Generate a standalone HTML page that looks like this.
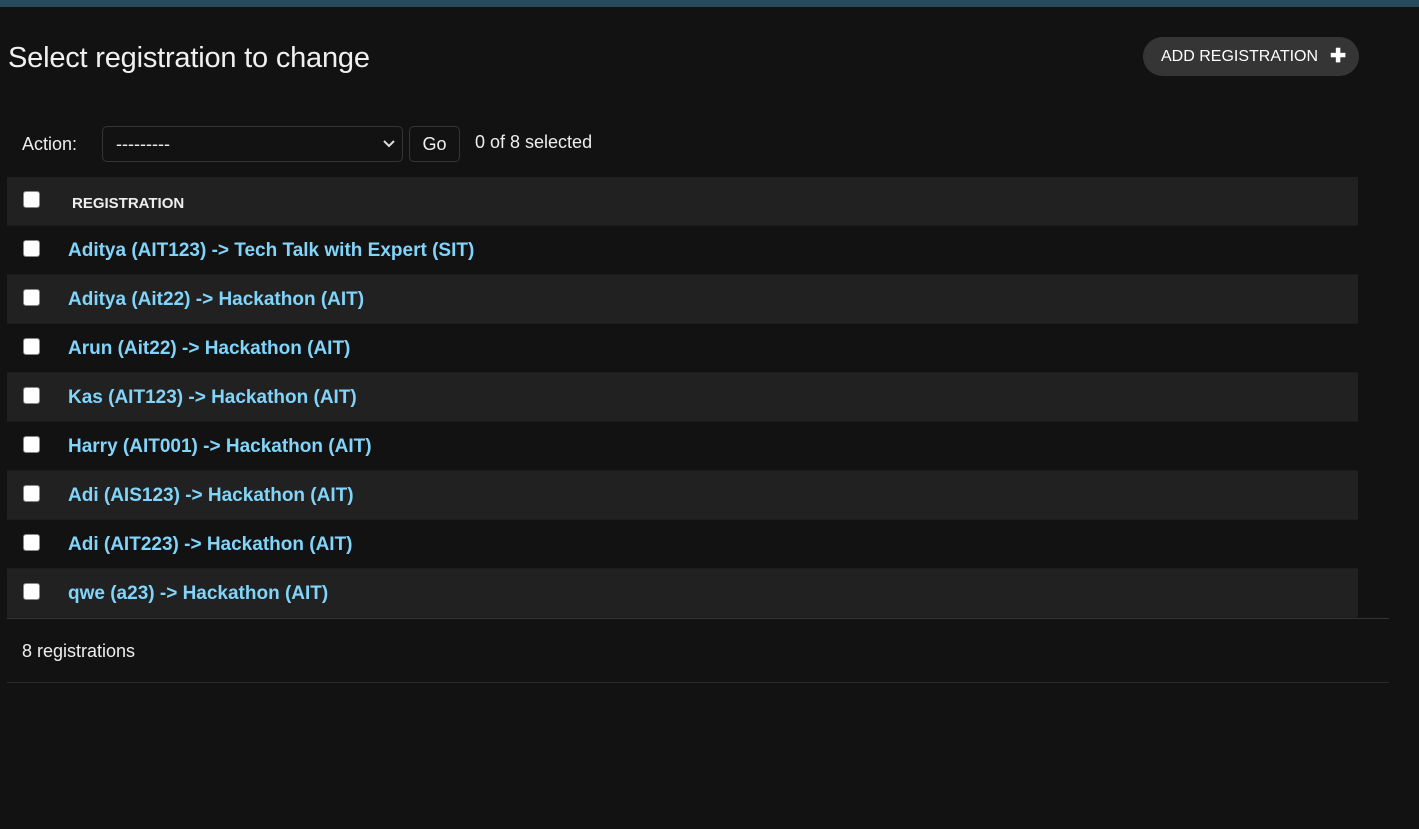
<!DOCTYPE html>
<html><head><meta charset="utf-8">
<style>
*{box-sizing:border-box;margin:0;padding:0}
body{width:1419px;height:829px;background:#121212;font-family:"Liberation Sans",sans-serif;color:#eee;position:relative;overflow:hidden}
.top{position:absolute;left:0;top:0;width:1419px;height:7px;background:#264b5d}
h1{position:absolute;left:8px;top:42px;font-size:29px;font-weight:300;color:#f0f0f0;letter-spacing:-0.2px}
.add{position:absolute;left:1143px;top:37px;width:216px;height:39px;border-radius:20px;background:#353535;color:#fff;font-size:16px;line-height:39px;padding-left:18px}
.add b{position:absolute;right:13px;top:0;font-size:19px;font-weight:bold}
.act{position:absolute;left:22px;top:134px;font-size:18px;color:#eee}
.sel{position:absolute;left:102px;top:126px;width:301px;height:36px;border:1px solid #353535;border-radius:5px;background:#121212;font-size:18px;line-height:34px;padding-left:13px}
.sel svg{position:absolute;right:6px;top:12px}
.go{position:absolute;left:409px;top:126px;width:51px;height:36px;border:1px solid #353535;border-radius:5px;font-size:18px;line-height:34px;text-align:center}
.cnt{position:absolute;left:475px;top:132px;font-size:18px}
.row{position:absolute;left:7px;width:1351px;height:49px;border-bottom:1px solid #1c1c1c}
.row.alt{background:#212121}
.cb{position:absolute;left:16px;top:14px;width:17px;height:17px;background:#fff;border:1px solid #888;border-radius:3px}
.row a{position:absolute;left:61px;top:14px;font-size:19px;font-weight:bold;color:#81d4fa;text-decoration:none;letter-spacing:0}
.hd{font-size:15px!important;color:#eee!important;left:65px!important;top:18px!important}
.line{position:absolute;left:7px;width:1382px;height:1px;background:#353535}
.ft{position:absolute;left:22px;top:641px;font-size:18px}
</style></head><body>
<div class="top"></div>
<h1>Select registration to change</h1>
<div class="add">ADD REGISTRATION <b>✚</b></div>
<div class="act">Action:</div>
<div class="sel">---------<svg width="14" height="10" viewBox="0 0 14 10"><path d="M2 2l5 5 5-5" stroke="#ddd" stroke-width="2" fill="none"/></svg></div>
<div class="go">Go</div>
<div class="cnt">0 of 8 selected</div>
<div class="row alt" style="top:177px"><div class="cb" style="top:14px"></div><a class="hd">REGISTRATION</a></div>
<div class="row" style="top:226px"><div class="cb"></div><a>Aditya (AIT123) -&gt; Tech Talk with Expert (SIT)</a></div>
<div class="row alt" style="top:275px"><div class="cb"></div><a>Aditya (Ait22) -&gt; Hackathon (AIT)</a></div>
<div class="row" style="top:324px"><div class="cb"></div><a>Arun (Ait22) -&gt; Hackathon (AIT)</a></div>
<div class="row alt" style="top:373px"><div class="cb"></div><a>Kas (AIT123) -&gt; Hackathon (AIT)</a></div>
<div class="row" style="top:422px"><div class="cb"></div><a>Harry (AIT001) -&gt; Hackathon (AIT)</a></div>
<div class="row alt" style="top:471px"><div class="cb"></div><a>Adi (AIS123) -&gt; Hackathon (AIT)</a></div>
<div class="row" style="top:520px"><div class="cb"></div><a>Adi (AIT223) -&gt; Hackathon (AIT)</a></div>
<div class="row alt" style="top:569px"><div class="cb"></div><a>qwe (a23) -&gt; Hackathon (AIT)</a></div>
<div class="line" style="top:618px"></div>
<div class="ft">8 registrations</div>
<div class="line" style="top:682px;background:#2a2a2a"></div>
</body></html>
